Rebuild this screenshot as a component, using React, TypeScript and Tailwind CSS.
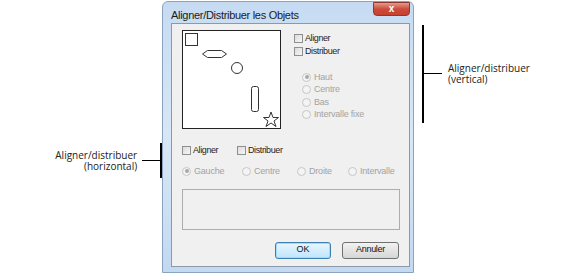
const dlg = { fontFamily: '"Liberation Sans", Arial, sans-serif' };
const note = { fontFamily: '"Open Sans", "DejaVu Sans", sans-serif' };

function Check({ label, className = "" }: { label: string; className?: string }) {
  return (
    <div className={`flex h-[13px] items-center ${className}`}>
      <div className="h-[9px] w-[9px] border border-[#8f8f8f] bg-gradient-to-br from-[#dcdcdc] to-[#f6f6f6]" />
      <span className="ml-[2px] text-[9px] tracking-[-0.4px] text-[#1e1e1e]">{label}</span>
    </div>
  );
}

function Radio({ label, on = false, className = "" }: { label: string; on?: boolean; className?: string }) {
  return (
    <div className={`flex h-[12.5px] items-center ${className}`}>
      <div className="flex h-[9px] w-[9px] items-center justify-center rounded-full border border-[#c6c6c6] bg-[#f4f4f4]">
        {on && <div className="h-[4px] w-[4px] rounded-full bg-[#a8a8a8]" />}
      </div>
      <span className="ml-[3px] text-[9px] tracking-[-0.2px] text-[#a3a3a3]">{label}</span>
    </div>
  );
}

function Preview() {
  return (
    <div className="h-[99px] w-[99px] border border-[#222] bg-white">
      <svg width="97" height="97" viewBox="0 0 97 97" fill="none" stroke="#333" strokeWidth="1">
        <rect x="2.5" y="2.5" width="12" height="12" />
        <polygon points="19.5,23 24.5,19.5 38.5,19.5 43.5,23 38.5,26.5 24.5,26.5" />
        <circle cx="54" cy="37" r="5.5" />
        <rect x="68.5" y="55.5" width="7" height="25" rx="2" />
        <polygon points="88,81 90,86.5 95.5,86.5 91,90 93,95.5 88,92 83,95.5 85,90 80.5,86.5 86,86.5" />
      </svg>
    </div>
  );
}

export default function App() {
  return (
    <div className="flex h-[275px] w-[563px] overflow-hidden bg-white">
      {/* horizontal note */}
      <div className="w-[162px] shrink-0 pt-[143px]" style={note}>
        <div className="flex items-center">
          <div className="w-[138px] text-right text-[10px] text-[#222]">
            <div className="h-[11px] leading-[11px]">Aligner/distribuer</div>
            <div className="h-[11px] leading-[11px]">(horizontal)</div>
          </div>
          <div className="ml-[5px] h-px w-[18px] bg-black" />
          <div className="h-[35px] w-[2px] bg-black" />
        </div>
      </div>

      {/* dialog window */}
      <div
        className="mt-[1px] h-[272px] w-[252px] shrink-0 rounded-t-[6px] border border-[#8aa3bf] bg-gradient-to-b from-[#c6dbf2] via-[#d8e7f7] to-[#c3d9f1] pl-[8px] pr-[3px]"
        style={dlg}
      >
        <div className="flex h-[21px] items-start justify-between">
          <span className="mt-[5px] text-[11px] tracking-[-0.3px] text-[#1b1b1b]">Aligner/Distribuer les Objets</span>
          <div className="flex h-[14px] w-[37px] items-center justify-center rounded-b-[4px] border border-[#8a3a30] bg-gradient-to-b from-[#e39a8d] via-[#cc4b38] to-[#c7402e] text-[10px] font-bold leading-none text-white">
            x
          </div>
        </div>
        <div className="h-[244px] border border-[#8d99a6] bg-[#f0f0f0] pl-[10px] pt-[6px]">
          <div className="flex">
            <Preview />
            <div className="ml-[13px] pt-[2px]">
              <Check label="Aligner" />
              <Check label="Distribuer" />
              <div className="ml-[8px] mt-[13px]">
                <Radio label="Haut" on />
                <Radio label="Centre" />
                <Radio label="Bas" />
                <Radio label="Intervalle fixe" />
              </div>
            </div>
          </div>

          <div className="mt-[15px] flex">
            <Check label="Aligner" className="w-[55px]" />
            <Check label="Distribuer" />
          </div>
          <div className="mt-[8px] flex">
            <Radio label="Gauche" on className="w-[60px]" />
            <Radio label="Centre" className="w-[55px]" />
            <Radio label="Droite" className="w-[51px]" />
            <Radio label="Intervalle" />
          </div>

          <div className="mt-[11px] h-[41px] w-[218px] border border-[#adadad] bg-[#f0f0f0]" />

          <div className="mt-[12px] flex justify-end pr-[10px]">
            <div className="flex h-[17px] w-[56px] items-center justify-center rounded-[3px] border border-[#3c7fb1] bg-gradient-to-b from-[#eaf6fd] to-[#bee6fd] text-[9px] text-[#111] shadow-[inset_0_0_0_1px_#9fdcfb]">
              OK
            </div>
            <div className="ml-[11px] flex h-[17px] w-[57px] items-center justify-center rounded-[3px] border border-[#707070] bg-gradient-to-b from-[#f2f2f2] to-[#d6d6d6] text-[9px] tracking-[-0.3px] text-[#111]">
              Annuler
            </div>
          </div>
        </div>
      </div>

      {/* vertical note */}
      <div className="ml-[8px] flex pt-[25px]" style={note}>
        <div className="h-[98px] w-[2px] bg-black" />
        <div className="flex h-[98px] items-center">
          <div className="mb-[2px] h-px w-[18px] bg-black" />
          <div className="ml-[6px] text-[10px] text-[#222]">
            <div className="h-[11px] leading-[11px]">Aligner/distribuer</div>
            <div className="h-[11px] leading-[11px]">(vertical)</div>
          </div>
        </div>
      </div>
    </div>
  );
}
